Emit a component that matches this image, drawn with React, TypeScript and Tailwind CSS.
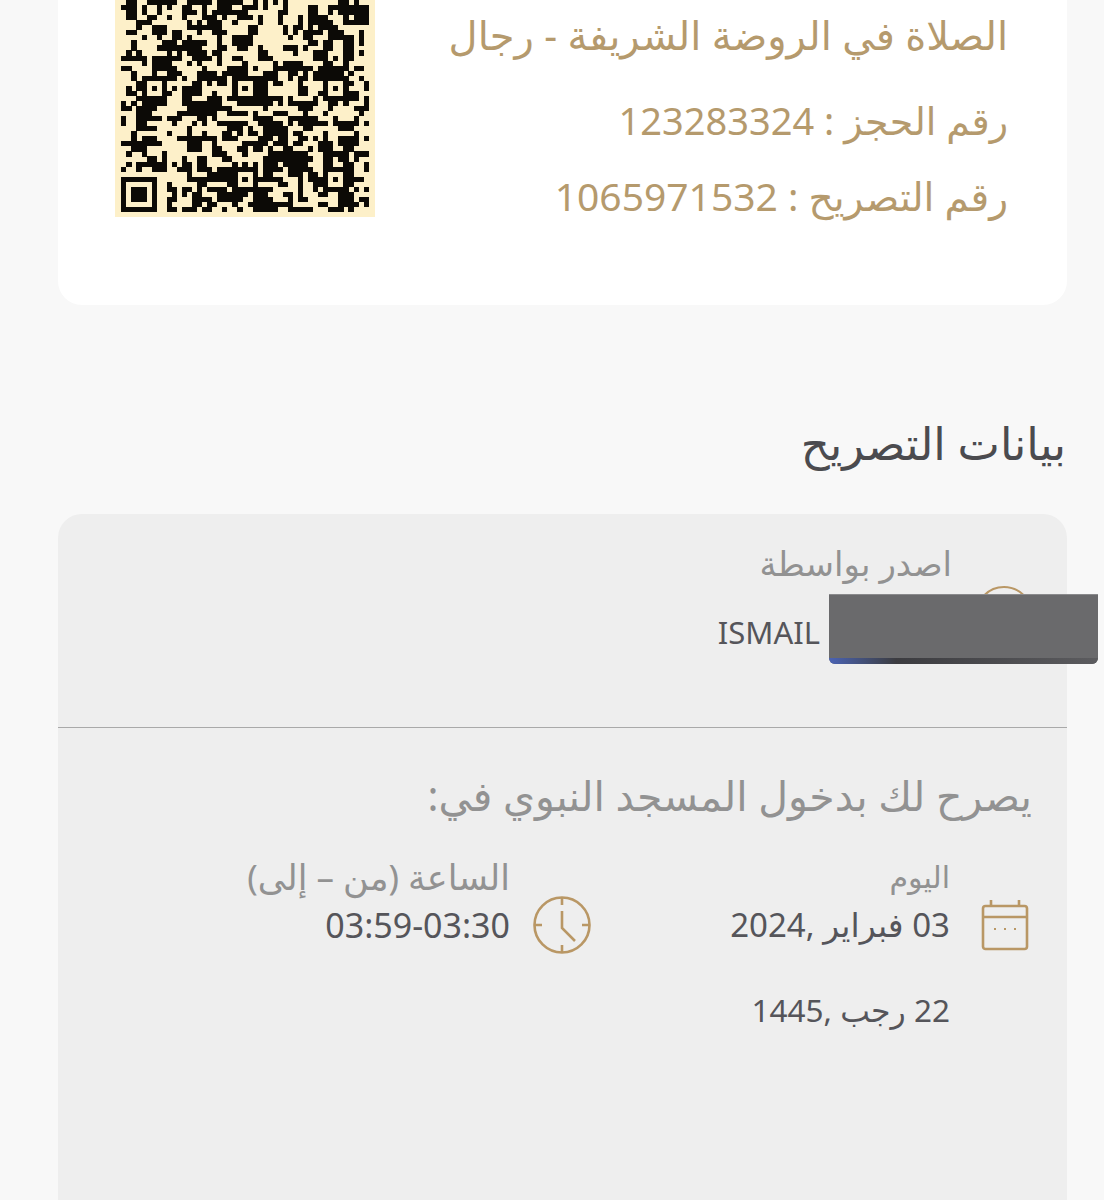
const QR_SIZE = 49;

// cheap seeded noise so the code looks like a real QR body
function qrCells() {
  const cells: { r: number; c: number }[] = [];
  let seed = 20240203;
  const next = () => {
    seed = (seed * 1664525 + 1013904223) >>> 0;
    return (seed >>> 16) / 65535;
  };
  const finder = (x: number, y: number) =>
    x === 0 || y === 0 || x === 6 || y === 6 || (x >= 2 && x <= 4 && y >= 2 && y <= 4);
  const centers = [
    [24, 6],
    [24, 24],
    [24, 42],
    [42, 24],
    [42, 42],
  ];
  const grid: boolean[][] = [];
  for (let r = 0; r < QR_SIZE; r++) {
    grid[r] = [];
    for (let c = 0; c < QR_SIZE; c++) {
      const left = c > 0 && grid[r][c - 1];
      const up = r > 0 && grid[r - 1][c];
      const near = (left ? 1 : 0) + (up ? 1 : 0);
      let on = next() < [0.3, 0.5, 0.68][near];
      if (r >= 41 && c <= 7) on = r >= 42 && c <= 6 && finder(c, r - 42);
      const a = centers.find(([cr, cc]) => Math.abs(r - cr) <= 2 && Math.abs(c - cc) <= 2);
      if (a) {
        const d = Math.max(Math.abs(r - a[0]), Math.abs(c - a[1]));
        on = d === 2 || d === 0;
      }
      grid[r][c] = on;
      if (on && r >= 7) cells.push({ r, c });
    }
  }
  return cells;
}

function QrCode() {
  return (
    <div className="w-[260px] h-[217px] bg-[#fdf0c9] overflow-hidden flex items-end justify-center pb-[5px]">
      <svg width="250" height="212" viewBox="0 7 49 42" shapeRendering="crispEdges" className="block">
        {qrCells().map((m) => (
          <rect key={`${m.r}-${m.c}`} x={m.c} y={m.r} width="1.02" height="1.02" fill="#0c0a06" />
        ))}
      </svg>
    </div>
  );
}

function CalendarIcon() {
  return (
    <svg width="48" height="52" viewBox="0 0 48 52" fill="none" stroke="#b99765" strokeWidth="2.6">
      <rect x="2" y="7" width="44" height="43" rx="2.5" />
      <path d="M2 18h44M10 1v6M38 1v6" />
      <path d="M13 30h2M23 30h2M33 30h2" strokeWidth="1.8" />
    </svg>
  );
}

function ClockIcon() {
  return (
    <svg width="58" height="58" viewBox="0 0 58 58" fill="none" stroke="#b99765" strokeWidth="2.6">
      <circle cx="29" cy="29" r="27.5" />
      <path d="M29 2v7M29 49v7M2 29h7M49 29h7" />
      <path d="M29 15v17l13 13" />
    </svg>
  );
}

export default function App() {
  return (
    <div
      dir="rtl"
      className="relative w-[1104px] h-[1200px] overflow-hidden bg-[#f8f8f8] font-['Noto_Sans','DejaVu_Sans',sans-serif]"
    >
      {/* Ticket card */}
      <div className="ml-[58px] mr-[37px] h-[305px] bg-white rounded-b-[24px] flex justify-between pr-[59px] pl-[57px] items-start">
        <div className="pt-[10px] text-[#b59a6d]">
          <div className="text-[40px] leading-[50px] whitespace-nowrap">الصلاة في الروضة الشريفة - رجال</div>
          <div className="text-[38px] leading-[50px] mt-[35px] whitespace-nowrap">رقم الحجز : 123283324</div>
          <div className="text-[39px] leading-[50px] mt-[26px] whitespace-nowrap">رقم التصريح : 1065971532</div>
        </div>
        <QrCode />
      </div>

      {/* Permit details */}
      <h2 className="mt-[108px] mr-[38px] text-[45px] leading-[60px] text-[#4b4b4f]">بيانات التصريح</h2>

      <div className="mt-[41px] ml-[58px] mr-[37px] h-[700px] bg-[#eeeeee] rounded-t-[24px]">
        <div className="relative h-[214px] border-b border-[#a9a9a9] flex gap-[23px] pr-[34px] pt-[72px]">
          <div className="w-[58px] h-[58px] rounded-full border-2 border-[#b99765] shrink-0" />
          <div className="-mt-[44px]">
            <div className="text-[34px] leading-[46px] -mt-[2px] text-[#929292]">اصدر بواسطة</div>
            <div className="text-[31px] leading-[46px] mt-[23px] mr-[132px] text-[#55555a]" dir="ltr">
              ISMAIL
            </div>
          </div>
          {/* redacted name */}
          <div className="absolute left-[771px] top-[80px] w-[269px] h-[70px] rounded-b-[6px] overflow-hidden flex flex-col bg-[#6a6a6c] border-t border-[#8a8a8c]">
            <div className="flex-1" />
            <div className="h-[6px] bg-gradient-to-r from-[#4a62b4] via-[#3c3c40] via-25% to-[#5c5c5f]" />
          </div>
        </div>

        <div className="pr-[35px] pt-[42px]">
          <div className="text-[41px] leading-[50px] text-[#929292] whitespace-nowrap">يصرح لك بدخول المسجد النبوي في:</div>
          <div className="flex mt-[37px] pr-[3px]">
            <div className="w-[438px] flex gap-[31px] items-start">
              <div className="mt-[42px] shrink-0">
                <CalendarIcon />
              </div>
              <div>
                <div className="text-[30px] leading-[40px] text-[#929292]">اليوم</div>
                <div className="text-[33px] leading-[44px] mt-[6px] text-[#55555a]">03 فبراير ,2024</div>
                <div className="text-[31.5px] leading-[44px] mt-[41px] text-[#55555a]">22 رجب ,1445</div>
              </div>
            </div>
            <div className="flex gap-[23px] items-start">
              <div className="mt-[39px] shrink-0">
                <ClockIcon />
              </div>
              <div>
                <div className="text-[35px] leading-[40px] text-[#929292] whitespace-nowrap">الساعة (من – إلى)</div>
                <div className="text-[34px] leading-[44px] mt-[6px] text-[#55555a]">03:59-03:30</div>
              </div>
            </div>
          </div>
        </div>
      </div>
    </div>
  );
}
